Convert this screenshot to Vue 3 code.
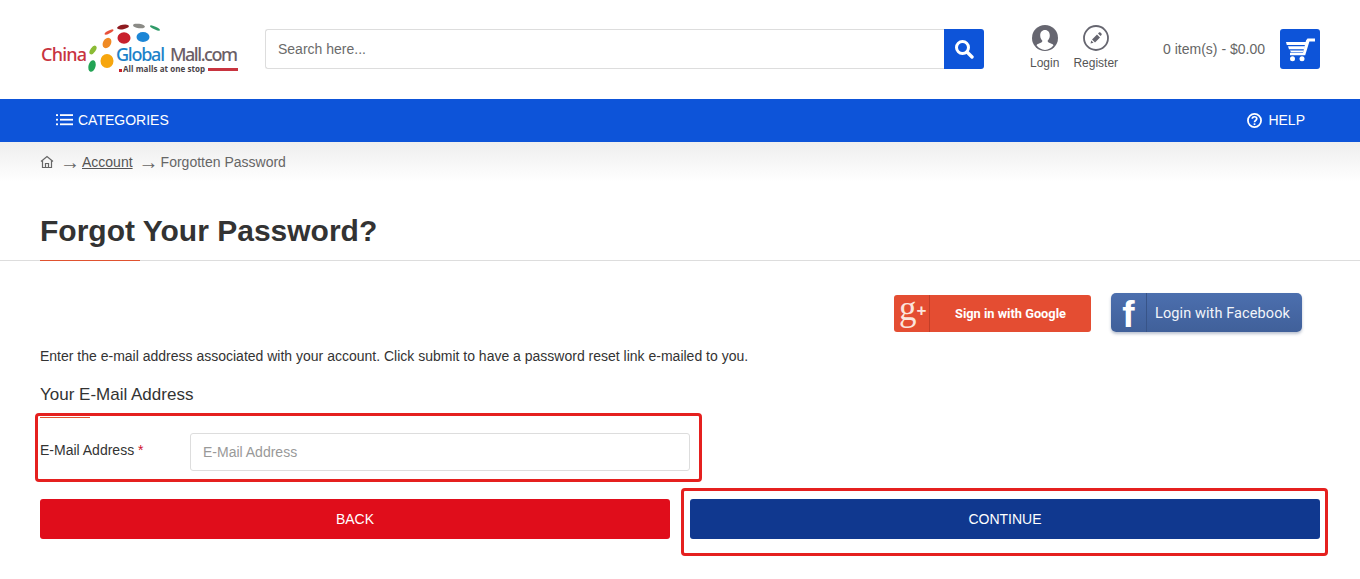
<script setup>
const crumbs = ['Forgotten Password']
</script>

<template>
  <div class="page">
    <header class="top">
      <svg class="logo" width="200" height="52" viewBox="0 0 200 52">
        <ellipse cx="69" cy="8" rx="5" ry="1.500" transform="rotate(-28 69 8)" fill="#e8503a"/>
        <ellipse cx="83" cy="3" rx="6" ry="2.200" transform="rotate(-10 83 3)" fill="#8e1b20"/>
        <ellipse cx="99" cy="2" rx="6" ry="2.200" transform="rotate(8 99 2)" fill="#8b8b86"/>
        <ellipse cx="115" cy="4" rx="5.500" ry="1.400" transform="rotate(25 115 4)" fill="#2f9a68"/>
        <ellipse cx="84" cy="14" rx="6.500" ry="5.800" fill="#c8202d"/>
        <ellipse cx="103" cy="13" rx="6.500" ry="5" fill="#1c86d6"/>
        <ellipse cx="67" cy="19" rx="4" ry="5.500" transform="rotate(30 67 19)" fill="#f08a24"/>
        <ellipse cx="53" cy="26" rx="2.500" ry="5" transform="rotate(35 53 26)" fill="#8bbb35"/>
        <ellipse cx="67" cy="37" rx="6.500" ry="7" fill="#f7a60e"/>
        <ellipse cx="52" cy="42" rx="3.500" ry="6" transform="rotate(15 52 42)" fill="#23a455"/>
        <text x="1" y="37" class="lg lg-china" textLength="46">China</text>
        <text x="76" y="37" class="lg lg-global" textLength="49">Global</text>
        <text x="130" y="37" class="lg lg-mall" textLength="68">Mall.com</text>
        <rect x="79" y="45" width="3" height="3" fill="#c8202d"/>
        <text x="83" y="48" class="lg-tag" textLength="82">All malls at one stop</text>
        <rect x="168" y="44" width="30" height="3" fill="#c8343f"/>
      </svg>

      <div class="search">
        <input class="search-input" type="text" placeholder="Search here..." />
        <button class="search-btn" aria-label="Search">
          <svg width="20" height="20" viewBox="0 0 20 20" fill="none" stroke="#fff">
            <circle cx="8.500" cy="8.500" r="6" stroke-width="3"/>
            <path d="M13 13l5 5" stroke-width="3.400" stroke-linecap="round"/>
          </svg>
        </button>
      </div>

      <div class="account">
        <a class="acc-link">
          <svg width="26" height="26" viewBox="0 0 26 26">
            <circle cx="13" cy="13" r="13" fill="#666670"/>
            <path d="M13 5c3 0 4.800 2.300 4.800 5.500 0 2.300-1 4.200-2.200 5.300 0 1.200 1 1.800 2.800 2.500 1.400.5 2.500 1.100 3.100 1.900A12 12 0 0 1 13 25a12 12 0 0 1-8.500-4.800c.6-.8 1.700-1.400 3.100-1.900 1.800-.7 2.800-1.300 2.800-2.500-1.200-1.100-2.200-3-2.200-5.300C8.200 7.300 10 5 13 5z" fill="#fff"/>
          </svg>
          <span>Login</span>
        </a>
        <a class="acc-link">
          <svg width="26" height="26" viewBox="0 0 26 26">
            <circle cx="13" cy="13" r="12" fill="#fff" stroke="#666670" stroke-width="1.800"/>
            <path d="M9 14.500l5-5 3 3-5 5z M15 8.500l1-1c.5-.4 1-.4 1.400 0l1.100 1.100c.4.400.4.900 0 1.400l-1 1z M8.300 15.500l2.200 2.200-3 .8z" fill="#666670"/>
          </svg>
          <span>Register</span>
        </a>
      </div>

      <div class="cart">
        <span class="cart-text">0 item(s) - $0.00</span>
        <button class="cart-btn" aria-label="Cart">
          <svg width="30" height="26" viewBox="0 0 30 26" fill="#fff">
            <path d="M21 4.500L22.500 2.500H30v3h-5.600l-4.200 13.800H5v-2.600h13z"/>
            <path d="M1 6h20.200l-.7 3H1.800zM3 10.300h17l-.8 2.900H4zM5 14.500h13.800l-.6 1.800H6z"/>
            <circle cx="7.500" cy="22.700" r="2.500"/>
            <circle cx="17" cy="22.700" r="2.500"/>
          </svg>
        </button>
      </div>
    </header>

    <nav class="nav">
      <a class="nav-item">
        <svg width="17" height="13" viewBox="0 0 17 13" fill="#fff">
          <rect x="0" y="1.200" width="2" height="1.800"/><rect x="4" y="1.200" width="13" height="1.800"/>
          <rect x="0" y="5.800" width="2" height="1.800"/><rect x="4" y="5.800" width="13" height="1.800"/>
          <rect x="0" y="10.400" width="2" height="1.800"/><rect x="4" y="10.400" width="13" height="1.800"/>
        </svg>
        CATEGORIES
      </a>
      <a class="nav-item help">
        <svg width="15" height="15" viewBox="0 0 16 16" fill="none" stroke="#fff">
          <circle cx="8" cy="8" r="7" stroke-width="1.900"/>
          <path d="M5.600 6.200c0-1.500 1.100-2.200 2.400-2.200s2.400.8 2.400 2.100c0 1.900-2.400 1.800-2.400 3.700" stroke-width="1.800"/>
          <rect x="7.100" y="11" width="1.800" height="1.800" fill="#fff" stroke="none"/>
        </svg>
        HELP
      </a>
    </nav>

    <div class="crumbs">
      <svg width="14" height="14" viewBox="0 0 14 14" fill="none" stroke="#666" stroke-width="1.200">
        <path d="M1 6.500L7 1.500l6 5"/>
        <path d="M2.500 5.500V12.500h9V5.500"/>
        <path d="M5.500 12.500V8.500h3v4"/>
      </svg>
      <span class="arrow first">→</span>
      <a class="crumb-link">Account</a>
      <span class="arrow second">→</span>
      <span v-for="c in crumbs" :key="c">{{ c }}</span>
    </div>

    <div class="title-wrap">
      <h1 class="title">Forgot Your Password?</h1>
    </div>

    <main class="content">
      <div class="social">
        <a class="g-btn">
          <span class="g-icon">g<span class="g-plus">+</span></span>
          <span class="g-text">Sign in with Google</span>
        </a>
        <a class="f-btn">
          <span class="f-icon">f</span>
          <span class="f-text">Login with Facebook</span>
        </a>
      </div>

      <p class="intro">Enter the e-mail address associated with your account. Click submit to have a password reset link e-mailed to you.</p>

      <h2 class="legend">Your E-Mail Address</h2>

      <div class="field-row">
        <label class="field-label">E-Mail Address <span class="req">*</span></label>
        <input class="field-input" type="text" placeholder="E-Mail Address" />
        <div class="mark mark-field"></div>
      </div>

      <div class="actions">
        <button class="btn back">BACK</button>
        <button class="btn continue">
          CONTINUE
          <span class="mark mark-continue"></span>
        </button>
      </div>
    </main>
  </div>
</template>

<style>
html, body { margin: 0; background: #fff; }
</style>

<style scoped>
.page {
  width: 1360px;
  height: 579px;
  overflow: hidden;
  font-family: "Liberation Sans", Arial, sans-serif;
  color: #333;
  background: #fff;
}
.top {
  height: 99px;
  box-sizing: border-box;
  padding: 0 40px;
  display: flex;
  align-items: flex-start;
}
.logo { margin-top: 24px; flex: none; overflow: visible; }
.lg { font: 500 18px "Noto Sans", sans-serif; }
.lg-china { fill: #c8343f; }
.lg-global { fill: #1d82c9; }
.lg-mall { fill: #6b5e66; }
.lg-tag { font: 700 8px "Open Sans", sans-serif; fill: #4a4348; }
.search {
  margin: 29px 0 0 25px;
  width: 719px;
  height: 40px;
  display: flex;
  flex: none;
}
.search-input {
  flex: 1;
  min-width: 0;
  box-sizing: border-box;
  height: 40px;
  padding: 0 12px;
  border: 1px solid #ddd;
  border-right: 0;
  border-radius: 3px 0 0 3px;
  font: 14px "Liberation Sans", sans-serif;
  outline: none;
  color: #666;
}
.search-input::placeholder { color: #6b6b6b; opacity: 1; }
.search-btn {
  width: 40px;
  height: 40px;
  border: 0;
  padding: 0;
  background: #0d54d9;
  border-radius: 0 3px 3px 0;
  display: flex;
  align-items: center;
  justify-content: center;
}
.account {
  display: flex;
  margin: 25px 0 0 46px;
  gap: 14px;
}
.acc-link {
  display: flex;
  flex-direction: column;
  align-items: center;
  gap: 5px;
  font-size: 12px;
  line-height: 15px;
  color: #555;
}
.cart {
  margin: 29px 0 0 auto;
  display: flex;
  align-items: flex-start;
  gap: 15px;
}
.cart-text { font-size: 14px; line-height: 40px; color: #666; }
.cart-btn {
  width: 40px;
  height: 40px;
  border: 0;
  padding: 0;
  background: #0d54d9;
  border-radius: 3px;
  display: flex;
  align-items: center;
  justify-content: center;
}
.nav {
  height: 43px;
  background: #0d54d9;
  display: flex;
  justify-content: space-between;
  align-items: center;
  padding: 0 55px 2px 56px;
  box-sizing: border-box;
  color: #fff;
  font-size: 14px;
}
.nav-item { display: flex; align-items: center; gap: 5px; }
.help { gap: 6px; }
.help svg { position: relative; top: 1px; }
.crumbs {
  height: 40px;
  box-sizing: border-box;
  padding: 0 0 0 40px;
  display: flex;
  align-items: center;
  font-size: 14px;
  color: #666;
  background: linear-gradient(#eee, #fff);
}
.crumbs svg { margin-right: 9px; }
.arrow {
  flex: none;
  width: 14px;
  margin-right: 5px;
  font-family: "Liberation Sans", sans-serif;
  font-size: 20px;
  line-height: 14px;
  text-indent: -3px;
  white-space: nowrap;
}
.arrow.second { margin-left: 9px; }
.crumb-link { text-decoration: underline; color: #555; }
.title-wrap {
  height: 79px;
  box-sizing: border-box;
  border-bottom: 1px solid #ddd;
  padding: 31px 0 0 40px;
  position: relative;
}
.title-wrap::after {
  content: "";
  position: absolute;
  left: 40px;
  bottom: -1px;
  width: 100px;
  height: 1px;
  background: #e0522f;
}
.title {
  margin: 0;
  font-size: 30px;
  line-height: 36px;
  font-weight: 700;
  color: #333;
}
.content { padding: 32px 40px 0; }
.social {
  display: flex;
  justify-content: flex-end;
  align-items: flex-start;
  gap: 20px;
  padding-right: 18px;
  height: 40px;
}
.g-btn {
  width: 197px;
  height: 37px;
  margin-top: 2px;
  background: #e44d32;
  border-radius: 3px;
  display: flex;
  color: #fff;
}
.g-icon {
  width: 36px;
  box-sizing: border-box;
  padding-left: 5px;
  border-right: 1px solid #c23f28;
  font: 35px/28px "Liberation Serif", serif;
  color: #fbe4dd;
  white-space: nowrap;
}
.g-plus {
  font: 700 17px/28px "Liberation Sans", sans-serif;
  vertical-align: 4px;
}
.g-text {
  flex: 1;
  text-align: center;
  font: 700 12.800px/37px Roboto, sans-serif;
}
.f-btn {
  width: 191px;
  height: 39px;
  background: linear-gradient(#4c6fae, #40609a);
  border-radius: 5px;
  display: flex;
  color: #f2f5fa;
  box-shadow: 0 2px 3px rgba(60, 80, 120, .35);
}
.f-icon {
  width: 35px;
  border-right: 1px solid #385488;
  font: 700 37px/44px "Liberation Sans", sans-serif;
  text-align: center;
  color: #fff;
}
.f-text {
  flex: 1;
  padding-right: 4px;
  text-align: center;
  font: 14.500px/41px Roboto, sans-serif;
  letter-spacing: 0.1px;
}
.intro {
  margin: 14px 0 0;
  font-size: 14px;
  line-height: 18px;
  color: #333;
}
.legend {
  margin: 20px 0 0;
  padding-bottom: 13px;
  font-size: 17px;
  line-height: 20px;
  font-weight: 400;
  color: #333;
  position: relative;
}
.legend::after {
  content: "";
  position: absolute;
  left: 0;
  bottom: 0;
  width: 50px;
  height: 1px;
  background: #e0522f;
}
.field-row {
  position: relative;
  margin-top: 15px;
  display: flex;
  align-items: flex-start;
  width: 650px;
}
.field-label {
  width: 150px;
  flex: none;
  font-size: 14px;
  line-height: 18px;
  padding-top: 8px;
}
.req { color: #d0112b; }
.field-input {
  width: 500px;
  height: 38px;
  box-sizing: border-box;
  border: 1px solid #ddd;
  border-radius: 3px;
  padding: 0 12px;
  font: 14px "Liberation Sans", sans-serif;
  outline: none;
}
.field-input::placeholder { color: #999; opacity: 1; }
.mark {
  position: absolute;
  box-sizing: border-box;
  border: 3px solid #e5201f;
  border-radius: 4px;
  pointer-events: none;
}
.mark-field { left: -5px; top: -20px; width: 667px; height: 69px; }
.actions {
  margin-top: 28px;
  display: flex;
  gap: 20px;
}
.btn {
  flex: 1;
  height: 40px;
  border: 0;
  border-radius: 3px;
  color: #fff;
  font: 14px "Liberation Sans", sans-serif;
  position: relative;
}
.back { background: #e00d1b; }
.continue { background: #10388f; }
.mark-continue { left: -9px; top: -11px; width: 647px; height: 68px; }
</style>
